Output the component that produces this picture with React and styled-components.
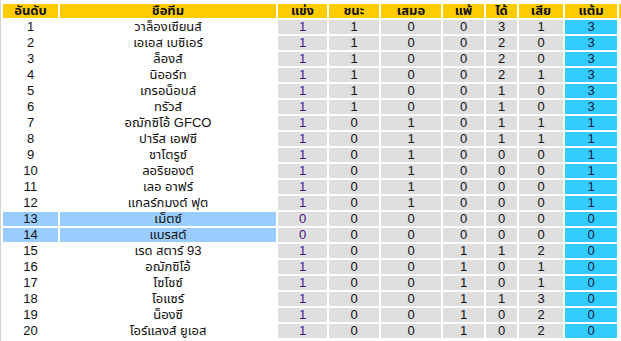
import React from "react";
import styled, { createGlobalStyle } from "styled-components";

const Global = createGlobalStyle`
  html, body { margin: 0; padding: 0; background: #fff; }
  body { font-family: "Liberation Sans", Arial, "Noto Sans Thai", "Noto Sans Thai UI", Loma, Garuda, sans-serif; }
`;

const COLS = "55px 216px 49px 50px 60px 41px 31px 44px 52px 10px";

const Wrap = styled.div`
  border-left: 1px solid #d4d4d4;
  padding: 4px 0 0 2px;
  height: 337px;
  overflow: hidden;
  display: flex;
  flex-direction: column;
  gap: 2px;
`;

const Row = styled.div`
  display: grid;
  grid-template-columns: ${COLS};
  column-gap: 2px;
  height: 14px;
`;

const HeadCell = styled.div`
  background: #ffcc00;
  color: #111;
  font-weight: bold;
  font-size: 13px;
  line-height: 14px;
  text-align: center;
  white-space: nowrap;
  overflow: hidden;
`;

const Cell = styled.div`
  background: ${(p) => (p.$hl ? "#99ccff" : p.$pts ? "#33ccff" : p.$stat ? "#dfdfdf" : "#fff")};
  color: ${(p) => (p.$played ? "#4a148c" : p.$pts ? "#0a1a40" : "#111")};
  font-size: 13px;
  line-height: 14px;
  text-align: center;
  white-space: nowrap;
  overflow: hidden;
`;

const headers = ["อันดับ", "ชื่อทีม", "แข่ง", "ชนะ", "เสมอ", "แพ้", "ได้", "เสีย", "แต้ม", ""];

const rows = [
  ["วาล็องเซียนส์", 1, 1, 0, 0, 3, 1, 3],
  ["เอเอส เบซิเอร์", 1, 1, 0, 0, 2, 0, 3],
  ["ล็องส์", 1, 1, 0, 0, 2, 0, 3],
  ["นิออร์ท", 1, 1, 0, 0, 2, 1, 3],
  ["เกรอน็อบล์", 1, 1, 0, 0, 1, 0, 3],
  ["ทรัวส์", 1, 1, 0, 0, 1, 0, 3],
  ["อฌักซิโอ้ GFCO", 1, 0, 1, 0, 1, 1, 1],
  ["ปารีส เอฟซี", 1, 0, 1, 0, 1, 1, 1],
  ["ชาโตรูซ์", 1, 0, 1, 0, 0, 0, 1],
  ["ลอริยองต์", 1, 0, 1, 0, 0, 0, 1],
  ["เลอ อาฟร์", 1, 0, 1, 0, 0, 0, 1],
  ["แกลร์กมงต์ ฟุต", 1, 0, 1, 0, 0, 0, 1],
  ["เม็ตซ์", 0, 0, 0, 0, 0, 0, 0],
  ["แบรสต์", 0, 0, 0, 0, 0, 0, 0],
  ["เรด สตาร์ 93", 1, 0, 0, 1, 1, 2, 0],
  ["อฌักซิโอ้", 1, 0, 0, 1, 0, 1, 0],
  ["โซโชซ์", 1, 0, 0, 1, 0, 1, 0],
  ["โอแซร์", 1, 0, 0, 1, 1, 3, 0],
  ["น็องซี่", 1, 0, 0, 1, 0, 2, 0],
  ["โอร์แลงส์ ยูเอส", 1, 0, 0, 1, 0, 2, 0],
];

export default function App() {
  return (
    <>
      <Global />
      <Wrap>
        <Row>
          {headers.map((h, i) => (
            <HeadCell key={i}>{h}</HeadCell>
          ))}
        </Row>
        {rows.map((r, i) => {
          const hl = i === 12 || i === 13;
          const [name, ...stats] = r;
          return (
            <Row key={i}>
              <Cell $hl={hl}>{i + 1}</Cell>
              <Cell $hl={hl}>{name}</Cell>
              {stats.map((s, j) => (
                <Cell key={j} $stat $played={j === 0} $pts={j === 6}>
                  {s}
                </Cell>
              ))}
              <Cell />
            </Row>
          );
        })}
      </Wrap>
    </>
  );
}
